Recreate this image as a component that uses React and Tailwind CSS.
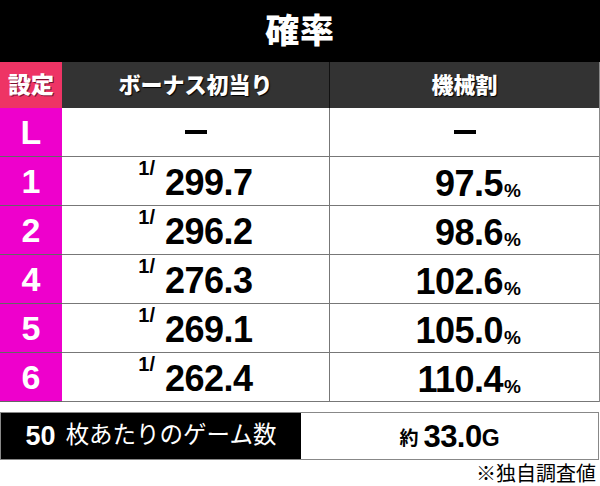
import React from 'react'

const rows = [
  { s: 'L', bonus: null, rate: null },
  { s: '1', bonus: '299.7', rate: '97.5' },
  { s: '2', bonus: '296.2', rate: '98.6' },
  { s: '4', bonus: '276.3', rate: '102.6' },
  { s: '5', bonus: '269.1', rate: '105.0' },
  { s: '6', bonus: '262.4', rate: '110.4' },
]

const font = { fontFamily: '"Liberation Sans", "Noto Sans CJK JP", sans-serif' }

export default function App() {
  return (
    <div className="w-[600px] h-[486px] bg-white overflow-hidden" style={font}>
      {/* Title */}
      <div className="h-[62px] bg-black flex items-center justify-center">
        <span className="text-white text-[34px] font-black leading-none tracking-wide">確率</span>
      </div>

      {/* Table */}
      <div className="grid grid-cols-[62px_268px_1fr] border-r border-[#888]">
        <div className="h-[46px] bg-[#ee3465] flex items-center justify-center text-white text-[23px] font-black [text-shadow:1px_1px_0_#7a1030]">
          設定
        </div>
        <div className="h-[46px] bg-[#333] flex items-center justify-center text-white text-[22px] font-black border-r border-[#111] [text-shadow:1px_1px_1px_#000]">
          ボーナス初当り
        </div>
        <div className="h-[46px] bg-[#333] flex items-center justify-center text-white text-[22px] font-black [text-shadow:1px_1px_1px_#000]">
          機械割
        </div>

        {rows.map((r) => (
          <React.Fragment key={r.s}>
            <div className="h-[49px] bg-[#ee00cc] border-b border-[#666] flex items-center justify-center text-white text-[34px] font-bold leading-none">
              {r.s}
            </div>
            <div className="h-[49px] border-b border-r border-[#777] flex items-center justify-center">
              {r.bonus ? (
                <div className="flex items-start text-black font-bold leading-none">
                  <span className="text-[20px] mt-[-3px] mr-[10px]">1/</span>
                  <span className="text-[36px] tracking-[-0.5px] mt-[4px]">{r.bonus}</span>
                </div>
              ) : (
                <span className="block w-[22px] h-[4px] bg-black" />
              )}
            </div>
            <div className="h-[49px] border-b border-[#777] flex items-center">
              {r.rate ? (
                <div className="w-full pr-[78px] flex justify-end items-end text-black font-bold leading-none mt-[6px]">
                  <span className="text-[36px] tracking-[-0.5px]">{r.rate}</span>
                  <span className="text-[19px] mb-[2px] ml-[1px]">%</span>
                </div>
              ) : (
                <div className="w-full flex justify-center">
                  <span className="block w-[22px] h-[4px] bg-black" />
                </div>
              )}
            </div>
          </React.Fragment>
        ))}
      </div>

      {/* 50枚あたり */}
      <div className="mt-[10px] h-[48px] flex border border-[#888] mr-[1px]">
        <div className="w-[300px] bg-black flex items-center justify-center text-white leading-none">
          <span className="text-[27px] font-bold mr-[10px]">50</span>
          <span className="text-[23.5px]">枚あたりのゲーム数</span>
        </div>
        <div className="flex-1 flex items-center justify-center text-black font-bold leading-none">
          <span className="text-[19px] mr-[5px] mt-[4px]">約</span>
          <span className="text-[31px] tracking-[-0.5px]">33.0</span>
          <span className="text-[23px] mt-[5px]">G</span>
        </div>
      </div>

      <div className="text-right pr-[4px] text-[20px] leading-none mt-[4px] text-black">※独自調査値</div>
    </div>
  )
}
